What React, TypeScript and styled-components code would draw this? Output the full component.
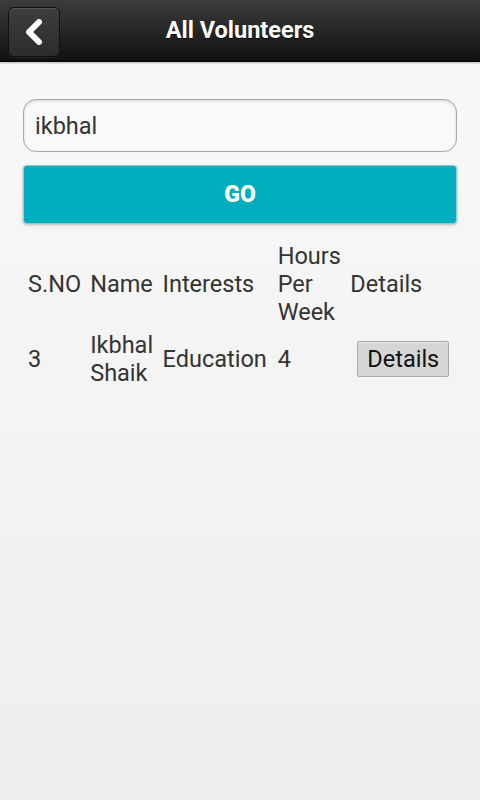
import React from "react";
import styled, { createGlobalStyle } from "styled-components";

const Global = createGlobalStyle`
  html, body { margin: 0; padding: 0; }
  body {
    font-family: Roboto, "Noto Sans", sans-serif;
    width: 480px;
    height: 800px;
    overflow: hidden;
    background: linear-gradient(#f9f9f9, #eeeeee);
  }
`;

const Page = styled.div`
  width: 480px;
  height: 800px;
  display: flex;
  flex-direction: column;
`;

const Header = styled.header`
  height: 60px;
  flex: 0 0 auto;
  display: flex;
  align-items: center;
  justify-content: center;
  position: relative;
  background: linear-gradient(#3c3c3c, #111111);
  border-bottom: 2px solid #0a0a0a;
  box-shadow: 0 1px 2px rgba(0,0,0,0.3);
`;

const BackButton = styled.button`
  position: absolute;
  left: 8px;
  top: 7px;
  width: 52px;
  height: 50px;
  border-radius: 6px;
  border: 1px solid #111;
  background: linear-gradient(#3d3d3d, #2c2c2c);
  box-shadow: inset 0 1px 0 rgba(255,255,255,0.12), 0 1px 1px rgba(255,255,255,0.08);
  display: flex;
  align-items: center;
  justify-content: center;
  padding: 0;
`;

const Title = styled.h1`
  margin: 0;
  color: #fff;
  font-size: 23.5px;
  font-weight: 700;
  text-shadow: 0 1px 0 #000;
`;

const Content = styled.main`
  padding: 37px 23px 0 23px;
  display: flex;
  flex-direction: column;
`;

const SearchInput = styled.input`
  box-sizing: border-box;
  height: 53px;
  width: 100%;
  border: 1px solid #a8a8a8;
  border-radius: 13px;
  background: #f9f9f9;
  box-shadow: inset 0 1px 3px rgba(0,0,0,0.15);
  font-family: Roboto, sans-serif;
  font-size: 23.5px;
  color: #333;
  padding: 0 11px;
  outline: none;
`;

const GoButton = styled.button`
  margin-top: 13px;
  height: 59px;
  width: 100%;
  box-sizing: border-box;
  border: 1px solid #8fcdd3;
  border-radius: 4px;
  background: #00aebe;
  box-shadow: 0 1px 3px rgba(0,0,0,0.25);
  color: #fff;
  font-family: Roboto, sans-serif;
  font-weight: 900;
  font-size: 23px;
  padding: 0;
`;

const Table = styled.table`
  margin-top: 15px;
  margin-left: 1px;
  border-collapse: separate;
  border-spacing: 1px;
  font-size: 23.5px;
  line-height: 28px;
  color: #333;
`;

const Cell = styled.td`
  padding: 2px 3px;
  vertical-align: middle;
  text-align: left;
  font-weight: 400;
`;

const HeadCell = styled(Cell).attrs({ as: "th" })`
  font-weight: 400;
`;

const DetailsButton = styled.button`
  margin-left: 7px;
  height: 36px;
  padding: 0 9px;
  border: 1px solid #aaa;
  border-radius: 2px;
  background: #d6d6d6;
  box-shadow: inset 0 1px 0 rgba(255,255,255,0.4);
  font-family: Roboto, sans-serif;
  font-size: 23.5px;
  color: #111;
`;

export default function App() {
  return (
    <Page>
      <Global />
      <Header>
        <BackButton aria-label="Back">
          <svg width="18" height="26" viewBox="0 0 18 26">
            <path d="M14 3 L4 13 L14 23" fill="none" stroke="#fff" strokeWidth="6" strokeLinecap="round" strokeLinejoin="round" />
          </svg>
        </BackButton>
        <Title>All Volunteers</Title>
      </Header>
      <Content>
        <SearchInput defaultValue="ikbhal" />
        <GoButton>GO</GoButton>
        <Table>
          <thead>
            <tr>
              <HeadCell>S.NO</HeadCell>
              <HeadCell>Name</HeadCell>
              <HeadCell>Interests</HeadCell>
              <HeadCell>Hours<br />Per<br />Week</HeadCell>
              <HeadCell>Details</HeadCell>
            </tr>
          </thead>
          <tbody>
            <tr>
              <Cell>3</Cell>
              <Cell>Ikbhal<br />Shaik</Cell>
              <Cell>Education</Cell>
              <Cell>4</Cell>
              <Cell><DetailsButton>Details</DetailsButton></Cell>
            </tr>
          </tbody>
        </Table>
      </Content>
    </Page>
  );
}
